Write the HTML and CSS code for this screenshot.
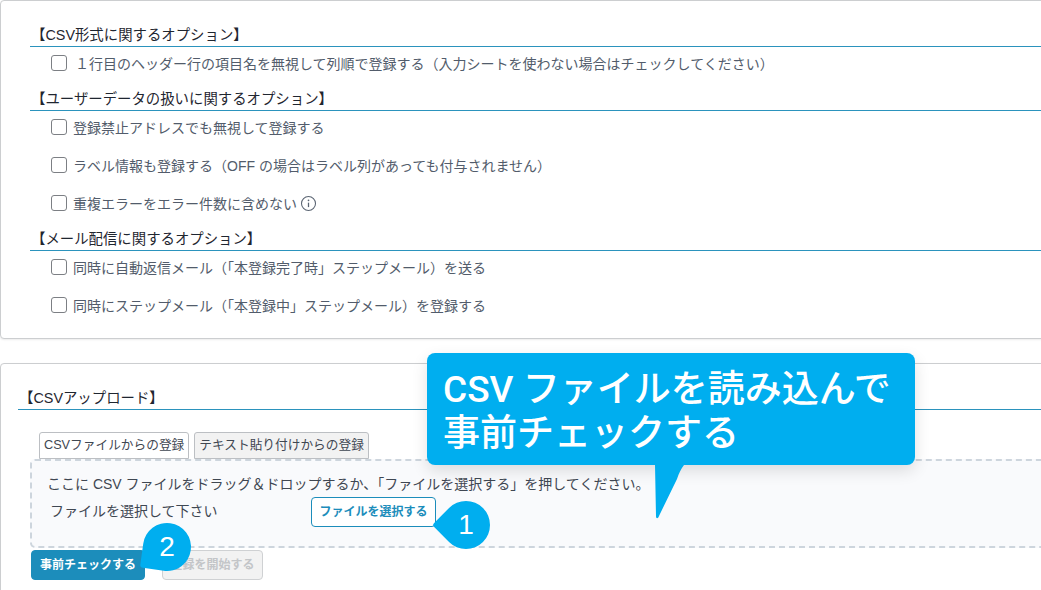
FILE: index.html
```html
<!DOCTYPE html>
<html lang="ja">
<head>
<meta charset="utf-8">
<title>CSV</title>
<link rel="stylesheet" href="styles.css">
</head>
<body>
<div class="page">
  <section class="card options">
    <h3 class="heading">【CSV形式に関するオプション】</h3>
    <div class="list">
      <label class="option"><input type="checkbox" class="check"><span>１行目のヘッダー行の項目名を無視して列順で登録する（入力シートを使わない場合はチェックしてください）</span></label>
    </div>
    <h3 class="heading">【ユーザーデータの扱いに関するオプション】</h3>
    <div class="list">
      <label class="option"><input type="checkbox" class="check"><span class="flush">登録禁止アドレスでも無視して登録する</span></label>
      <label class="option"><input type="checkbox" class="check"><span class="flush">ラベル情報も登録する（OFF の場合はラベル列があっても付与されません）</span></label>
      <label class="option"><input type="checkbox" class="check"><span class="flush">重複エラーをエラー件数に含めない</span>
        <svg class="info" viewBox="0 0 16 16" width="17" height="17"><circle cx="8" cy="8" r="6.6" fill="none" stroke="#5a6472" stroke-width="1"/><circle cx="8" cy="5" r=".8" fill="#5a6472"/><path d="M8 7.2v4.2" stroke="#5a6472" stroke-width="1.2" fill="none"/></svg>
      </label>
    </div>
    <h3 class="heading">【メール配信に関するオプション】</h3>
    <div class="list">
      <label class="option"><input type="checkbox" class="check"><span class="flush">同時に自動返信メール（「本登録完了時」ステップメール）を送る</span></label>
      <label class="option"><input type="checkbox" class="check"><span class="flush">同時にステップメール（「本登録中」ステップメール）を登録する</span></label>
    </div>
  </section>

  <section class="card upload">
    <h3 class="heading upload-heading">【CSVアップロード】</h3>
    <div class="tabs">
      <button class="tab active">CSVファイルからの登録</button>
      <button class="tab">テキスト貼り付けからの登録</button>
    </div>
    <div class="drop">
      <p class="drop-text">ここに CSV ファイルをドラッグ＆ドロップするか、「ファイルを選択する」を押してください。</p>
      <div class="file-row">
        <span class="file-name">ファイルを選択して下さい</span>
        <button class="btn btn-outline">ファイルを選択する</button>
      </div>
    </div>
    <div class="actions">
      <button class="btn btn-primary">事前チェックする</button>
      <button class="btn btn-disabled">登録を開始する</button>
    </div>
  </section>

  <div class="callout">
    <p class="callout-text">CSV ファイルを読み込んで<br>事前チェックする</p>
    <svg class="tail" viewBox="0 0 30 54" width="30" height="54"><path d="M0 0H29C26 4 24 8 22 14L4 51C3 54 1 54 1 51Z" fill="#00aeef"/></svg>
  </div>
  <div class="badge badge-one"><span class="drop-shape"></span><span class="num">1</span></div>
  <div class="badge badge-two"><span class="drop-shape"></span><span class="num">2</span></div>
</div>
</body>
</html>
```
FILE: styles.css
```css
* { box-sizing: border-box; }
html, body { margin: 0; padding: 0; background: #fff; }
body { overflow: hidden; font-family: "Liberation Sans", "Noto Sans CJK JP", sans-serif; }
.page { position: relative; width: 1041px; height: 590px; overflow: hidden; }

.card {
  width: 1060px;
  background: #fff;
  border: 1px solid #ccced0;
  border-radius: 4px;
  box-shadow: 0 1px 2px rgba(0, 0, 0, .08);
}
.options { height: 339px; padding: 21px 0 0 29px; }
.upload { height: 260px; margin-top: 24px; padding: 21px 0 0 17px; }

.heading {
  margin: 11px 0 0;
  padding: 1px 0 0 1px;
  height: 25px;
  line-height: 24px;
  font-size: 14.4px;
  font-weight: 400;
  color: #1f2630;
  border-bottom: 1px solid #2b93bd;
}
.options .heading:first-child { margin-top: 0; }
.upload-heading { margin-top: 0; }

.list { display: flex; flex-direction: column; gap: 14px; padding: 4px 0 0 21px; }
.option {
  display: flex;
  align-items: center;
  height: 24px;
  font-size: 14px;
  color: #525c6b;
}
.check {
  appearance: none;
  width: 16px;
  height: 16px;
  margin: 0 6px 0 0;
  flex: none;
  background: #fff;
  border: 1px solid #7c7f84;
  border-radius: 3px;
}
.option span { padding-left: 2px; }
.option .flush { padding-left: 0; }
.info { margin-left: 3px; }

.tabs { display: flex; gap: 5px; margin: 22px 0 0 21px; height: 27px; }
.tab {
  height: 27px;
  padding: 0 4px;
  font: 400 12.7px/25px "Liberation Sans", "Noto Sans CJK JP", sans-serif;
  color: #3f4752;
  background: #f2f2f2;
  border: 1px solid #bcbfc3;
  border-radius: 3px 3px 0 0;
}
.tab.active { background: #fff; }

.drop {
  width: 1040px;
  height: 89px;
  margin: 0 0 0 12px;
  padding: 13px 0 0 15px;
  background: #f9fafc;
  border: 2px dashed #cdd5dd;
  border-radius: 5px;
}
.drop-text { margin: 0; font-size: 14px; line-height: 20px; color: #3f4752; }
.file-row { display: flex; align-items: flex-start; margin-top: 3px; padding-left: 3px; }
.file-name { width: 261px; padding-top: 4px; font-size: 14px; line-height: 20px; color: #3f4752; }

.btn {
  height: 30px;
  padding: 0;
  font: 700 12px/28px "Liberation Sans", "Noto Sans CJK JP", sans-serif;
  border-radius: 4px;
}
.btn-outline { width: 125px; color: #1c8dbb; background: #fff; border: 1px solid #1c8dbb; }
.actions { display: flex; gap: 17px; margin: 2px 0 0 13px; }
.btn-primary { width: 114px; color: #fff; background: #1c8dbb; border: 1px solid #1c8dbb; }
.btn-disabled { width: 101px; color: #c3c5c8; background: #f2f2f2; border: 1px solid #cfd1d3; }

.callout {
  position: absolute;
  left: 427px;
  top: 353px;
  width: 488px;
  height: 112px;
  padding: 15px 0 0 16px;
  background: #00aeef;
  border-radius: 8px;
  box-shadow: 0 6px 16px rgba(0, 0, 0, .12);
}
.callout-text {
  margin: 0;
  font-family: Roboto, "Noto Sans CJK JP", sans-serif;
  font-size: 37px;
  line-height: 44px;
  font-weight: 500;
  color: #fff;
  white-space: nowrap;
}
.tail { position: absolute; left: 228px; top: 112px; }

.badge {
  position: absolute;
  width: 48px;
  height: 48px;
  display: flex;
  align-items: center;
  justify-content: center;
}
.badge-one { left: 442px; top: 501px; }
.badge-two { left: 143px; top: 523px; }
.drop-shape {
  position: absolute;
  inset: 0;
  background: #00aeef;
  border-radius: 50% 50% 50% 3px;
}
.badge-one .drop-shape { transform: rotate(45deg); }
.badge-two .drop-shape { transform: rotate(8deg); }
.num { position: relative; font-size: 28px; line-height: 1; color: #fff; }
```
